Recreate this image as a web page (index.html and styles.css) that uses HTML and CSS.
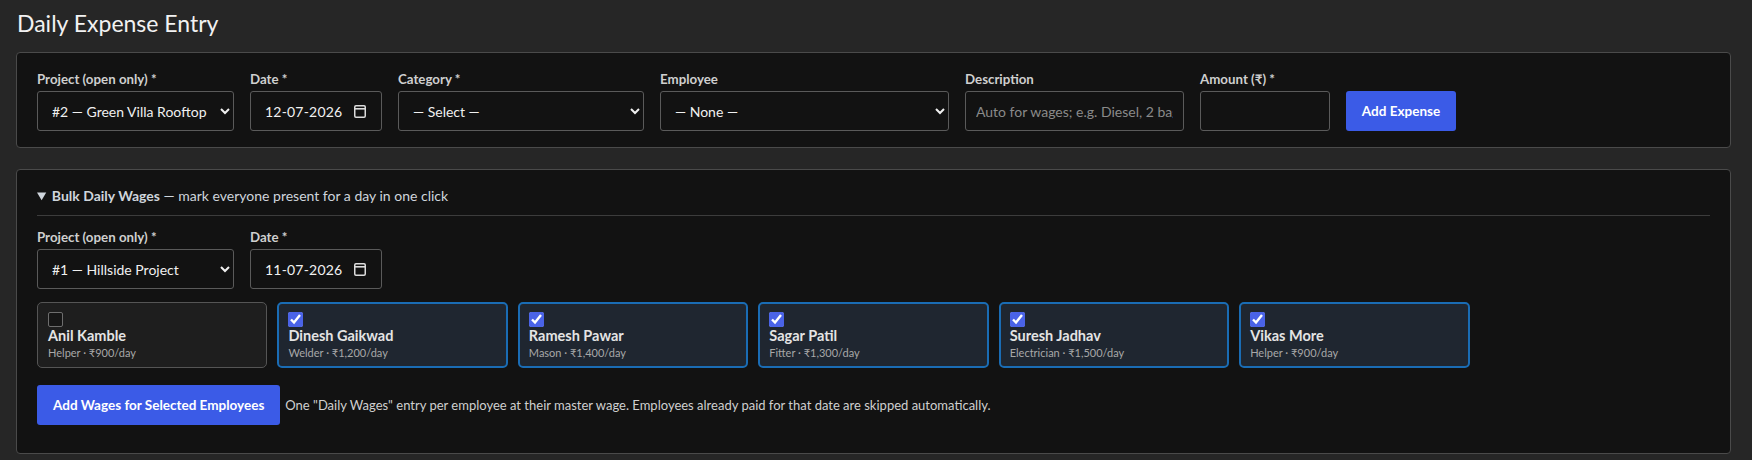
FILE: index.html
```html
<!DOCTYPE html>
<html lang="en">
<head>
    <meta charset="UTF-8">
    <meta name="viewport" content="width=device-width, initial-scale=1.0">
    <title>Daily Expense Entry</title>
    <link rel="stylesheet" href="styles.css">
</head>
<body>
    <h1 class="page-title">Daily Expense Entry</h1>

    <!-- Single expense -->
    <form class="card">
        <div class="form-row">
            <div class="field w-project">
                <label>Project (open only) *</label>
                <select class="control">
                    <option>#2 — Green Villa Rooftop</option>
                    <option>#1 — Hillside Project</option>
                </select>
            </div>
            <div class="field w-date">
                <label>Date *</label>
                <div class="control date-control">
                    <input type="text" class="date-text" value="12-07-2026">
                    <svg class="cal-icon" width="12" height="13" viewBox="0 0 12 13" fill="none" stroke="currentColor">
                        <rect x="0.75" y="0.75" width="10.5" height="11.5" rx="1.2" stroke-width="1.5"/>
                        <line x1="1" y1="3.8" x2="11" y2="3.8" stroke-width="1.6"/>
                    </svg>
                </div>
            </div>
            <div class="field w-category">
                <label>Category *</label>
                <select class="control">
                    <option>— Select —</option>
                </select>
            </div>
            <div class="field w-employee">
                <label>Employee</label>
                <select class="control">
                    <option>— None —</option>
                </select>
            </div>
            <div class="field w-desc">
                <label>Description</label>
                <input type="text" class="control" placeholder="Auto for wages; e.g. Diesel, 2 bags cement">
            </div>
            <div class="field w-amount">
                <label>Amount (₹) *</label>
                <input type="text" class="control">
            </div>
            <button type="button" class="btn btn-expense">Add Expense</button>
        </div>
    </form>

    <!-- Bulk wages -->
    <details class="card" open>
        <summary class="bulk-summary"><b>Bulk Daily Wages</b> — mark everyone present for a day in one click</summary>

        <div class="form-row">
            <div class="field w-project">
                <label>Project (open only) *</label>
                <select class="control">
                    <option>#1 — Hillside Project</option>
                </select>
            </div>
            <div class="field w-date">
                <label>Date *</label>
                <div class="control date-control">
                    <input type="text" class="date-text" value="11-07-2026">
                    <svg class="cal-icon" width="12" height="13" viewBox="0 0 12 13" fill="none" stroke="currentColor">
                        <rect x="0.75" y="0.75" width="10.5" height="11.5" rx="1.2" stroke-width="1.5"/>
                        <line x1="1" y1="3.8" x2="11" y2="3.8" stroke-width="1.6"/>
                    </svg>
                </div>
            </div>
        </div>

        <div class="emp-grid">
            <label class="emp">
                <input type="checkbox">
                <span class="emp-name">Anil Kamble</span>
                <span class="emp-meta">Helper · ₹900/day</span>
            </label>
            <label class="emp on">
                <input type="checkbox" checked>
                <span class="emp-name">Dinesh Gaikwad</span>
                <span class="emp-meta">Welder · ₹1,200/day</span>
            </label>
            <label class="emp on">
                <input type="checkbox" checked>
                <span class="emp-name">Ramesh Pawar</span>
                <span class="emp-meta">Mason · ₹1,400/day</span>
            </label>
            <label class="emp on">
                <input type="checkbox" checked>
                <span class="emp-name">Sagar Patil</span>
                <span class="emp-meta">Fitter · ₹1,300/day</span>
            </label>
            <label class="emp on">
                <input type="checkbox" checked>
                <span class="emp-name">Suresh Jadhav</span>
                <span class="emp-meta">Electrician · ₹1,500/day</span>
            </label>
            <label class="emp on">
                <input type="checkbox" checked>
                <span class="emp-name">Vikas More</span>
                <span class="emp-meta">Helper · ₹900/day</span>
            </label>
        </div>

        <div class="bulk-actions">
            <button type="button" class="btn">Add Wages for Selected Employees</button>
            <span class="hint">One "Daily Wages" entry per employee at their master wage. Employees already paid for that date are skipped automatically.</span>
        </div>
    </details>
</body>
</html>
```

FILE: styles.css
```css
:root {
    color-scheme: dark;
}

body {
    font-family: Lato, "Noto Sans", sans-serif;
    background-color: #262626;
    color: #e6e6e6;
    margin: 0;
    padding: 9px 21px 0 16px;
}

.page-title {
    font-size: 23px;
    font-weight: 400;
    line-height: 29px;
    margin: 0 0 14px 1px;
    color: #f2f2f2;
}

.card {
    display: block;
    background-color: #121212;
    border: 1px solid #4a4a4a;
    border-radius: 4px;
    padding: 16px 20px;
    margin-bottom: 21px;
}

.form-row {
    display: flex;
    align-items: flex-end;
    gap: 16px;
}

.field {
    display: flex;
    flex-direction: column;
    gap: 2px;
}

.field label {
    font-size: 13.3px;
    font-weight: 700;
    line-height: 20px;
    color: #cfcfcf;
}

.control {
    height: 40px;
    box-sizing: border-box;
    background-color: #121212;
    color: #f0f0f0;
    border: 1px solid #5a5a5a;
    border-radius: 3px;
    padding: 0 10px;
    font-family: inherit;
    font-size: 14px;
}

.control::placeholder {
    color: #8a8a8a;
}

.date-control {
    display: flex;
    align-items: center;
    padding: 0 15px 0 14px;
}

.date-text {
    flex: 1;
    min-width: 0;
    border: none;
    background: transparent;
    color: inherit;
    font: inherit;
    letter-spacing: 0.2px;
    padding: 0;
    outline: none;
}

.cal-icon {
    color: #dcdcdc;
    flex-shrink: 0;
}

.w-project { width: 197px; }
.w-date { width: 132px; }
.w-category { width: 246px; }
.w-employee { width: 289px; }
.w-desc { width: 219px; }
.w-amount { width: 130px; }

.btn {
    height: 40px;
    padding: 0 16px;
    background-color: #3b5be7;
    color: #ffffff;
    border: none;
    border-radius: 3px;
    font-family: inherit;
    font-size: 13.5px;
    font-weight: 700;
    cursor: pointer;
}

.btn:hover {
    background-color: #3350d4;
}

.btn-expense {
    width: 110px;
    padding: 0;
}

/* bulk section */
.bulk-summary {
    font-size: 14px;
    line-height: 20px;
    color: #cfd5dc;
    padding-bottom: 9px;
    border-bottom: 1px solid #3c3c3c;
    margin-bottom: 11px;
    cursor: pointer;
}

.bulk-summary b {
    font-weight: 700;
}

.emp-grid {
    display: grid;
    grid-template-columns: repeat(auto-fill, minmax(220px, 1fr));
    gap: 10px;
    margin-top: 13px;
}

.emp {
    display: flex;
    flex-direction: column;
    align-items: flex-start;
    padding: 9px 10px 7px;
    background-color: #1e1e1e;
    border: 1px solid #555;
    border-radius: 5px;
    cursor: pointer;
}

.emp.on {
    background-color: #1f2630;
    border: 2px solid #1a6cb4;
    padding: 8px 9px 6px;
}

.emp input {
    width: 15px;
    height: 15px;
    margin: 0;
    accent-color: #4a63e8;
}

.emp input:not(:checked) {
    appearance: none;
    box-sizing: border-box;
    border: 1px solid #6e6e6e;
    border-radius: 2px;
    background-color: #161616;
}

.emp-name {
    font-size: 14.5px;
    font-weight: 700;
    line-height: 18px;
    color: #e4e4e4;
}

.emp-meta {
    font-size: 11px;
    line-height: 15px;
    color: #a8a8a8;
}

.bulk-actions {
    display: flex;
    align-items: center;
    gap: 5px;
    margin: 17px 0 12px;
}

.hint {
    font-size: 13px;
    color: #cfcfcf;
}
```
